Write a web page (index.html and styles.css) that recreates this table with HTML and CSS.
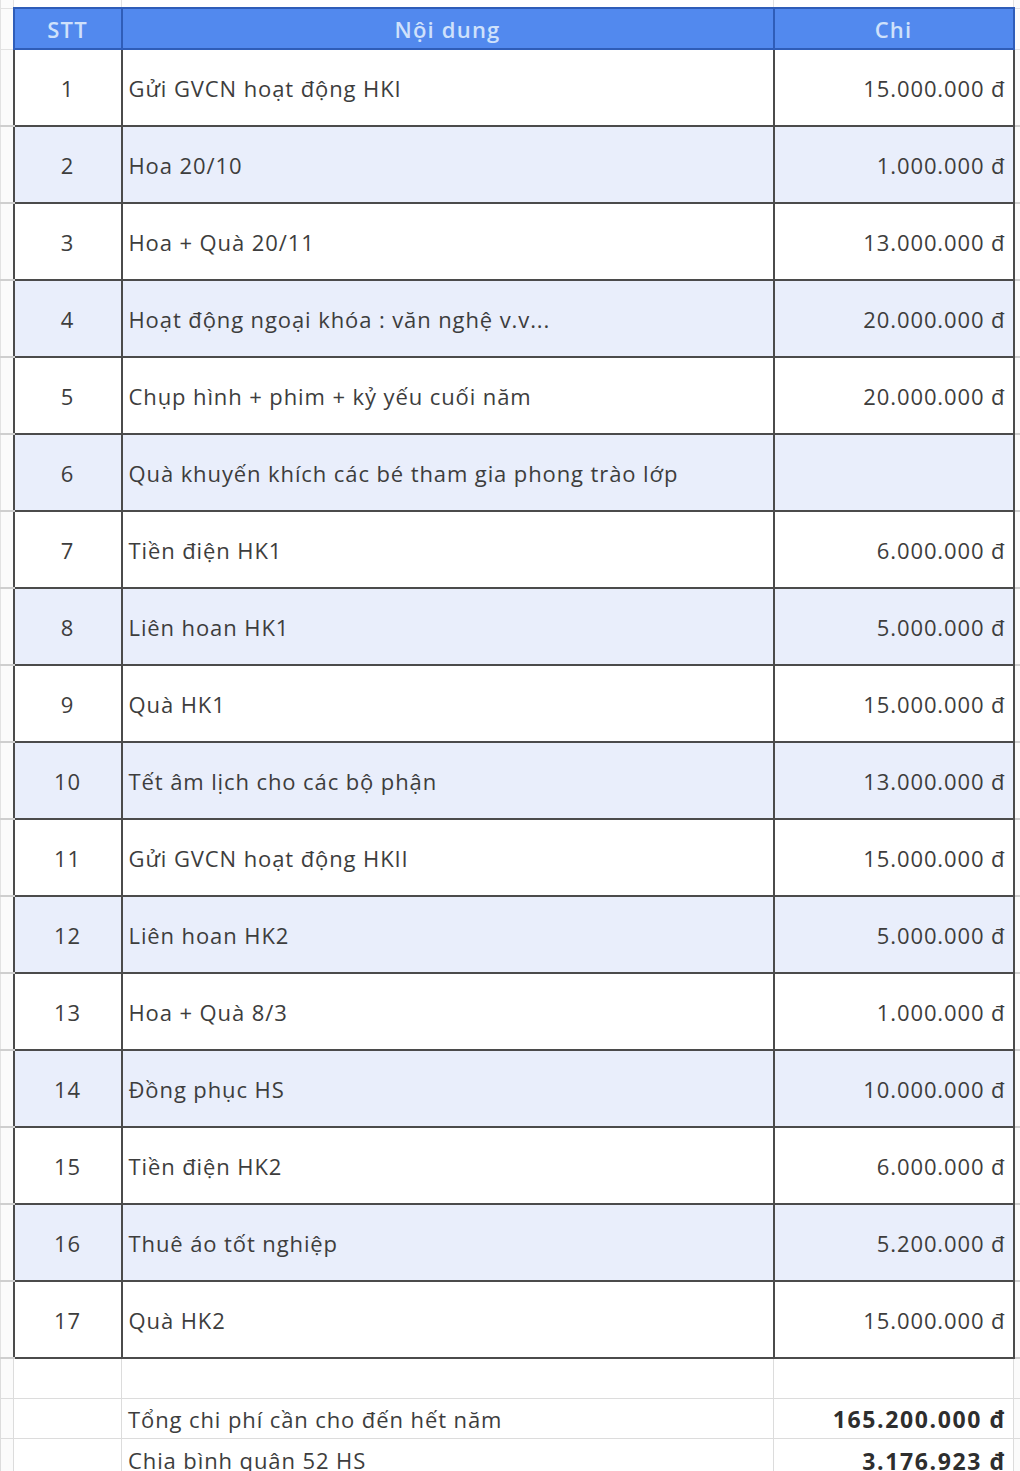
FILE: index.html
```html
<!DOCTYPE html>
<html lang="vi">
<head>
<meta charset="utf-8">
<title>Chi phí</title>
<link rel="stylesheet" href="styles.css">
</head>
<body>
<div class="sheet">
<table class="grid">
  <colgroup>
    <col class="c-gut"><col class="c-stt"><col class="c-desc"><col class="c-amt"><col class="c-tail">
  </colgroup>
  <tr class="top"><td class="gut"></td><td></td><td></td><td></td><td class="gut"></td></tr>
  <tr class="head">
    <td class="gut"></td><th>STT</th><th>Nội dung</th><th>Chi</th><td class="gut"></td>
  </tr>
  <tr class="row"><td class="gut"></td><td class="stt">1</td><td class="desc">Gửi GVCN hoạt động HKI</td><td class="amt">15.000.000 đ</td><td class="gut"></td></tr>
  <tr class="row alt"><td class="gut"></td><td class="stt">2</td><td class="desc">Hoa 20/10</td><td class="amt">1.000.000 đ</td><td class="gut"></td></tr>
  <tr class="row"><td class="gut"></td><td class="stt">3</td><td class="desc">Hoa + Quà 20/11</td><td class="amt">13.000.000 đ</td><td class="gut"></td></tr>
  <tr class="row alt"><td class="gut"></td><td class="stt">4</td><td class="desc">Hoạt động ngoại khóa : văn nghệ v.v...</td><td class="amt">20.000.000 đ</td><td class="gut"></td></tr>
  <tr class="row"><td class="gut"></td><td class="stt">5</td><td class="desc">Chụp hình + phim + kỷ yếu cuối năm</td><td class="amt">20.000.000 đ</td><td class="gut"></td></tr>
  <tr class="row alt"><td class="gut"></td><td class="stt">6</td><td class="desc">Quà khuyến khích các bé tham gia phong trào lớp</td><td class="amt"></td><td class="gut"></td></tr>
  <tr class="row"><td class="gut"></td><td class="stt">7</td><td class="desc">Tiền điện HK1</td><td class="amt">6.000.000 đ</td><td class="gut"></td></tr>
  <tr class="row alt"><td class="gut"></td><td class="stt">8</td><td class="desc">Liên hoan HK1</td><td class="amt">5.000.000 đ</td><td class="gut"></td></tr>
  <tr class="row"><td class="gut"></td><td class="stt">9</td><td class="desc">Quà HK1</td><td class="amt">15.000.000 đ</td><td class="gut"></td></tr>
  <tr class="row alt"><td class="gut"></td><td class="stt">10</td><td class="desc">Tết âm lịch cho các bộ phận</td><td class="amt">13.000.000 đ</td><td class="gut"></td></tr>
  <tr class="row"><td class="gut"></td><td class="stt">11</td><td class="desc">Gửi GVCN hoạt động HKII</td><td class="amt">15.000.000 đ</td><td class="gut"></td></tr>
  <tr class="row alt"><td class="gut"></td><td class="stt">12</td><td class="desc">Liên hoan HK2</td><td class="amt">5.000.000 đ</td><td class="gut"></td></tr>
  <tr class="row"><td class="gut"></td><td class="stt">13</td><td class="desc">Hoa + Quà 8/3</td><td class="amt">1.000.000 đ</td><td class="gut"></td></tr>
  <tr class="row alt"><td class="gut"></td><td class="stt">14</td><td class="desc">Đồng phục HS</td><td class="amt">10.000.000 đ</td><td class="gut"></td></tr>
  <tr class="row"><td class="gut"></td><td class="stt">15</td><td class="desc">Tiền điện HK2</td><td class="amt">6.000.000 đ</td><td class="gut"></td></tr>
  <tr class="row alt"><td class="gut"></td><td class="stt">16</td><td class="desc">Thuê áo tốt nghiệp</td><td class="amt">5.200.000 đ</td><td class="gut"></td></tr>
  <tr class="row"><td class="gut"></td><td class="stt">17</td><td class="desc">Quà HK2</td><td class="amt">15.000.000 đ</td><td class="gut"></td></tr>
  <tr class="plain"><td class="gut"></td><td></td><td></td><td></td><td class="gut"></td></tr>
  <tr class="plain"><td class="gut"></td><td></td><td class="desc">Tổng chi phí cần cho đến hết năm</td><td class="amt total">165.200.000 đ</td><td class="gut"></td></tr>
  <tr class="plain last"><td class="gut"></td><td></td><td class="desc">Chia bình quân 52 HS</td><td class="amt total">3.176.923 đ</td><td class="gut"></td></tr>
</table>
</div>
</body>
</html>
```
FILE: styles.css
```css
html, body {
  margin: 0;
  padding: 0;
  background: #ffffff;
}
.sheet {
  width: 1020px;
  height: 1471px;
  overflow: hidden;
}
.grid {
  border-collapse: collapse;
  table-layout: fixed;
  width: 1021px;
  font-family: "Open Sans", "Liberation Sans", sans-serif;
  font-size: 22px;
  letter-spacing: 0.9px;
  color: #3d3d3d;
}
.c-gut { width: 13px; }
.c-stt { width: 108px; }
.c-desc { width: 652px; }
.c-amt { width: 240px; }
.c-tail { width: 8px; }

.grid td, .grid th {
  border: 1px solid #e2e2e2;
  padding: 0;
  white-space: nowrap;
  overflow: hidden;
}
.grid .gut {
  background: #fbfbfb;
}
.top td { height: 7px; border-top: none; }

.head th {
  height: 39px;
  background: #5289ee;
  color: #cfe1fb;
  font-weight: 600;
  font-size: 22px;
  letter-spacing: 1.2px;
  text-align: center;
  border: 2px solid #2f5db8;
}

.row td:not(.gut) {
  height: 75px;
  border: 2px solid #4b4b4b;
  background: #ffffff;
}
.row.alt td:not(.gut) {
  background: #e9eefb;
}
.row .gut {
  border-bottom: 2px solid #cfcfcf;
}

.stt {
  text-align: center;
}
.desc {
  text-align: left;
  padding-left: 6px !important;
}
.amt {
  text-align: right;
  padding-right: 7px !important;
}

.plain td {
  height: 39px;
  border: 1px solid #dcdcdc;
  background: #ffffff;
}
.plain.last td {
  vertical-align: top;
  padding-top: 6px;
}
.plain .total {
  font-weight: 700;
  font-size: 23px;
  color: #2e2e2e;
  letter-spacing: 1.6px;
}
```
